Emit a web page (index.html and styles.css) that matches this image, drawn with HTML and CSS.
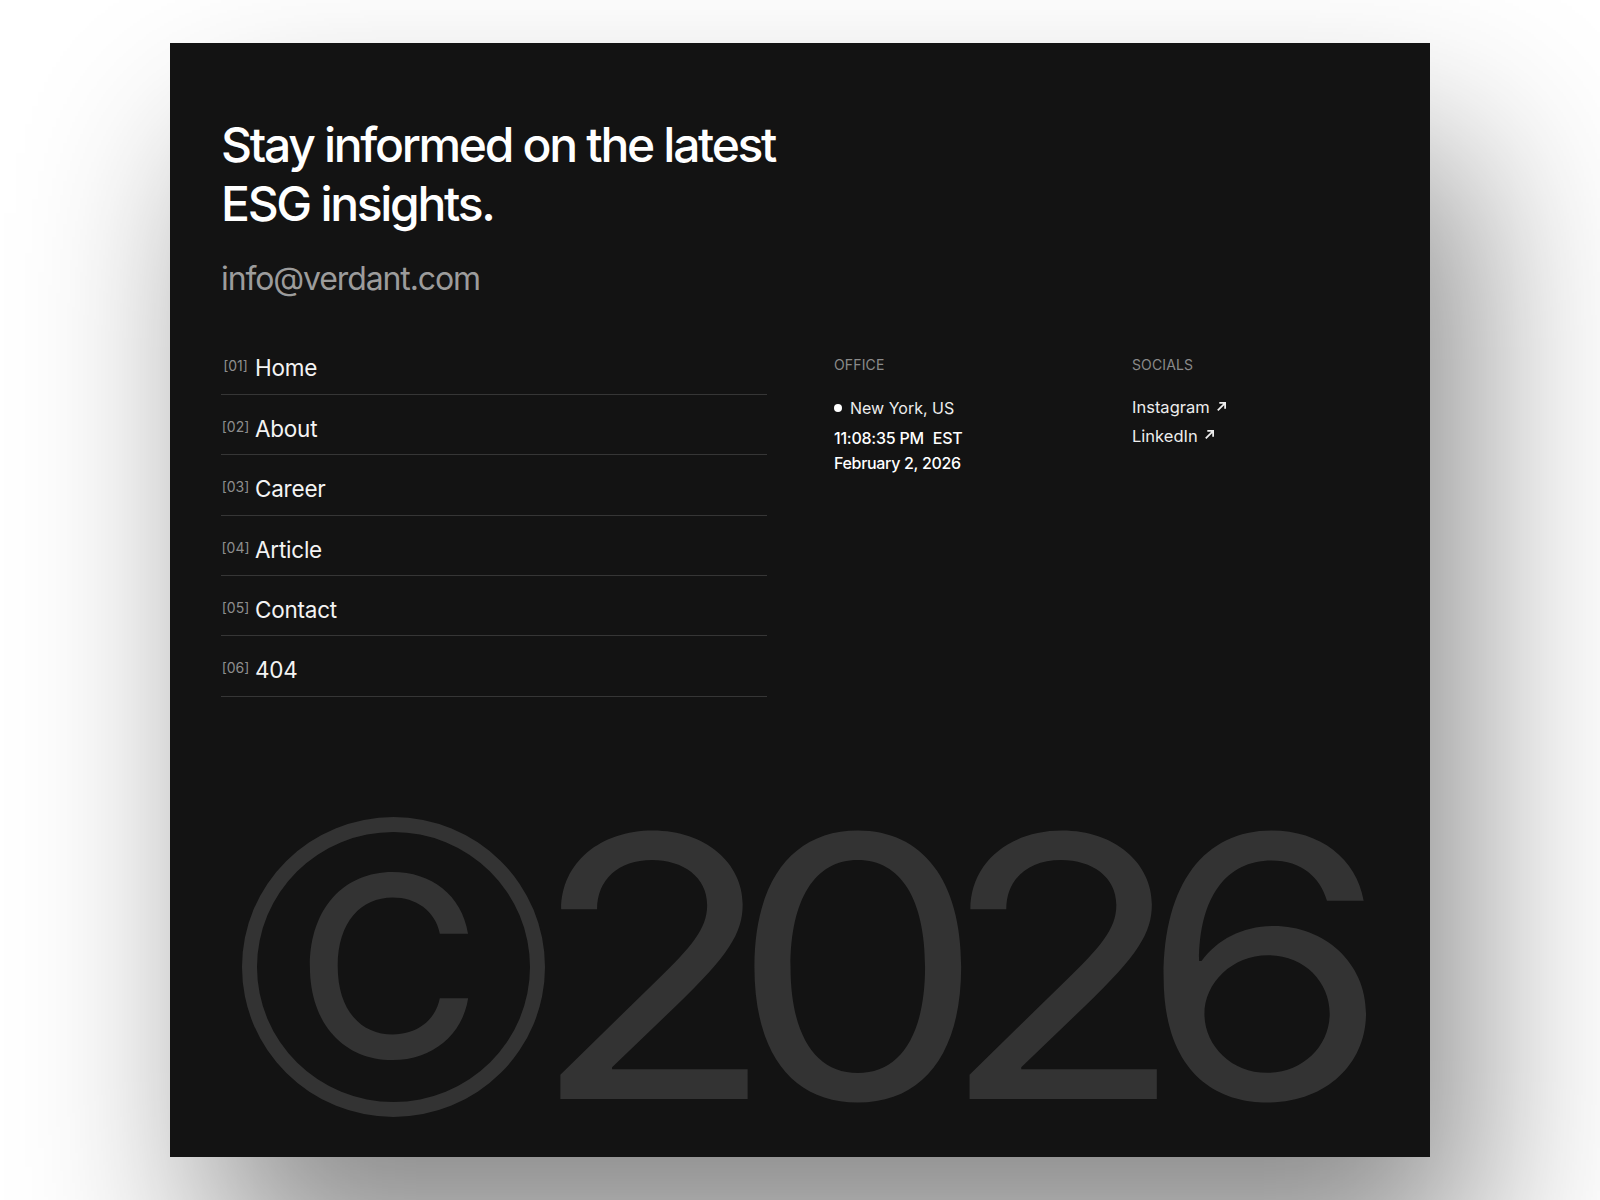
FILE: index.html
```html
<!DOCTYPE html>
<html lang="en">
<head>
<meta charset="utf-8">
<title>Verdant footer</title>
<link rel="stylesheet" href="styles.css">
</head>
<body>
<footer class="card">
  <h2 class="headline">Stay informed on the latest ESG insights.</h2>
  <a class="email" href="#">info@verdant.com</a>

  <div class="columns">
    <nav class="nav">
      <a class="nav-row" href="#"><span class="nav-num">[01]</span><span class="nav-label">Home</span></a>
      <a class="nav-row" href="#"><span class="nav-num">[02]</span><span class="nav-label">About</span></a>
      <a class="nav-row" href="#"><span class="nav-num">[03]</span><span class="nav-label">Career</span></a>
      <a class="nav-row" href="#"><span class="nav-num">[04]</span><span class="nav-label">Article</span></a>
      <a class="nav-row" href="#"><span class="nav-num">[05]</span><span class="nav-label">Contact</span></a>
      <a class="nav-row" href="#"><span class="nav-num">[06]</span><span class="nav-label">404</span></a>
    </nav>

    <div class="office">
      <div class="col-title">OFFICE</div>
      <div class="location"><span class="dot"></span>New York, US</div>
      <div class="time"><span>11:08:35 PM</span><span>EST</span></div>
      <div class="date">February 2, 2026</div>
    </div>

    <div class="socials">
      <div class="col-title">SOCIALS</div>
      <a class="social" href="#">Instagram <svg class="arrow" viewBox="0 0 10 10" width="10" height="10"><path d="M1.6 8.6 L8 2.2 M3 1.8 H8.3 V7" fill="none" stroke="currentColor" stroke-width="1.6"/></svg></a>
      <a class="social" href="#">LinkedIn <svg class="arrow" viewBox="0 0 10 10" width="10" height="10"><path d="M1.6 8.6 L8 2.2 M3 1.8 H8.3 V7" fill="none" stroke="currentColor" stroke-width="1.6"/></svg></a>
    </div>
  </div>

  <div class="bigyear" aria-label="©2026">
    <span class="copy"><span class="copy-c">C</span></span><span class="digits">2026</span>
  </div>
</footer>
</body>
</html>
```

FILE: styles.css
```css
* { box-sizing: border-box; }

html, body {
  margin: 0;
  padding: 0;
}

body {
  width: 1600px;
  height: 1200px;
  overflow: hidden;
  background: #ffffff;
  font-family: Inter, "Noto Sans", sans-serif;
  padding-top: 43px;
}

a { color: inherit; text-decoration: none; }

.card {
  width: 1260px;
  margin: 0 auto;
  background: #131313;
  color: #ffffff;
  padding: 72px 50px 6px 51px;
  box-shadow: 40px 110px 170px rgba(0, 0, 0, 0.46);
}

.headline {
  margin: 0;
  max-width: 590px;
  font-size: 48px;
  line-height: 59px;
  font-weight: 500;
  letter-spacing: -0.048em;
  color: #ffffff;
}

.email {
  display: block;
  margin-top: 27px;
  font-size: 32px;
  line-height: 38.4px;
  font-weight: 400;
  letter-spacing: -0.035em;
  color: #9c9c9c;
}

.columns {
  margin-top: 36px;
  display: grid;
  grid-template-columns: 546px 231px 1fr;
  column-gap: 67px;
  align-items: start;
}

.nav {
  display: flex;
  flex-direction: column;
}

.nav-row {
  display: flex;
  align-items: flex-start;
  gap: 5px;
  padding: 21px 0 12px 0;
  border-bottom: 1px solid #363636;
  height: 60.4px;
}

.nav-num {
  width: 29px;
  flex: none;
  text-align: center;
  margin-top: 4px;
  font-size: 14px;
  line-height: 14px;
  color: #8e8e8e;
}

.nav-label {
  font-size: 22.5px;
  line-height: 26.4px;
  letter-spacing: -0.01em;
  color: #f4f4f4;
}

.col-title {
  margin-top: 23px;
  font-size: 14px;
  line-height: 16.8px;
  color: #8a8a8a;
  letter-spacing: 0.01em;
}

.office, .socials {
  display: flex;
  flex-direction: column;
}

.location {
  display: flex;
  align-items: center;
  gap: 8px;
  margin-top: 22px;
  font-size: 16px;
  line-height: 24px;
  color: #ededed;
  margin-bottom: 6px;
}

.dot {
  width: 8px;
  height: 8px;
  border-radius: 50%;
  background: #ffffff;
}

.time {
  display: flex;
  gap: 9px;
  font-size: 16px;
  line-height: 24.5px;
  font-weight: 500;
  letter-spacing: -0.015em;
  color: #ffffff;
}

.date {
  font-size: 16px;
  line-height: 24.5px;
  font-weight: 500;
  letter-spacing: -0.02em;
  color: #ffffff;
}

.socials .col-title {
  margin-bottom: 19px;
}

.social {
  display: flex;
  align-items: center;
  gap: 6px;
  font-size: 16.5px;
  line-height: 28.6px;
  color: #ededed;
  letter-spacing: 0;
}

.arrow {
  width: 11px;
  height: 11px;
  margin-top: -3px;
}

.bigyear {
  margin-top: 86px;
  display: flex;
  align-items: flex-start;
  height: 368px;
  padding-left: 21px;
  color: #333333;
  white-space: nowrap;
}

.copy {
  flex: none;
  width: 303px;
  height: 300px;
  margin-top: 34px;
  border: 15px solid #333333;
  border-radius: 50%;
  display: flex;
  align-items: center;
  justify-content: center;
  padding-right: 10px;
}

.copy-c {
  font-size: 252px;
  line-height: 1;
  font-weight: 500;
  letter-spacing: 0;
  color: #333333;
}

.digits {
  display: inline-block;
  margin-left: -15px;
  font-size: 364px;
  line-height: 368px;
  font-weight: 400;
  letter-spacing: -0.114em;
  transform: scaleX(1.11);
  transform-origin: left center;
}
```
